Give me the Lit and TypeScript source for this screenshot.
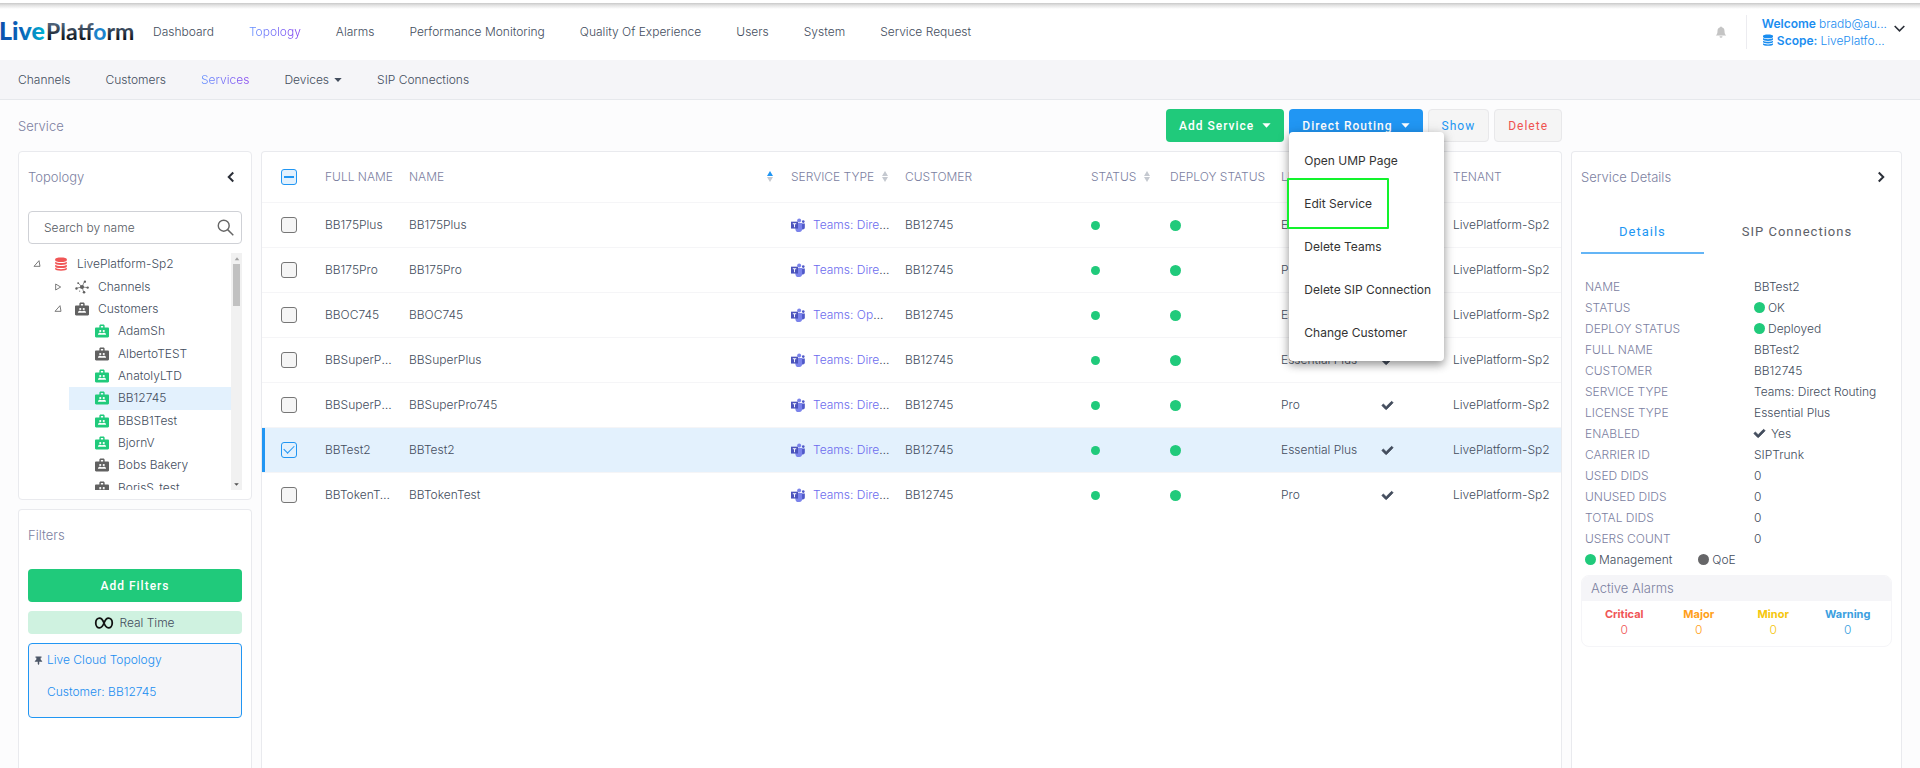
import { LitElement, html, svg, css } from "lit";
import { customElement, property } from "lit/decorators.js";
import { classMap } from "lit/directives/class-map.js";

const TICK =
  "M173.9 439.4l-166.4-166.4c-10-10-10-26.2 0-36.2l36.2-36.2c10-10 26.2-10 36.2 0L192 312.7 432.1 72.6c10-10 26.2-10 36.2 0l36.2 36.2c10 10 10 26.2 0 36.2l-294.4 294.4c-10 10-26.2 10-36.2 0z";

@customElement("lp-icon")
class LpIcon extends LitElement {
  @property() name = "";
  @property({ type: Number }) size = 14;

  static styles = css`
    :host { display: inline-flex; flex: none; vertical-align: middle; }
    svg { display: block; }
  `;

  private shape() {
    switch (this.name) {
      case "tick":
        return svg`<g transform="scale(.046875)"><path fill="currentColor" stroke="currentColor" stroke-width="36" stroke-linejoin="round" d=${TICK}/></g>`;
      case "database":
        return svg`<g fill="currentColor"><path d="M2 4c0-2 4-3 10-3s10 1 10 3v1.600c0 2-4 3-10 3s-10-1-10-3z"/><path d="M2 8.200c1.600 1.500 5.500 2.200 10 2.200s8.400-.7 10-2.200v2.700c0 1.800-4 2.900-10 2.900S2 12.700 2 10.900z"/><path d="M2 13.400c1.600 1.500 5.500 2.200 10 2.200s8.400-.7 10-2.200v2.700C22 17.900 18 19 12 19S2 17.900 2 16.100z"/><path d="M2 18.600c1.600 1.500 5.500 2.200 10 2.200s8.400-.7 10-2.200V21c0 1.600-4 2.500-10 2.500S2 22.600 2 21z"/></g>`;
      case "hub":
        return svg`<g stroke="currentColor" stroke-width="1.200"><path d="M12 12 2.500 14M12 12 5 4.500M12 12 16 3M12 12l9.500 1M12 12l3 9"/></g><g fill="currentColor"><circle cx="12" cy="12" r="3.600"/><circle cx="2.500" cy="14.500" r="2"/><circle cx="5.500" cy="5.500" r="1.500"/><circle cx="17" cy="3" r="2"/><circle cx="21.700" cy="13" r="2"/><circle cx="15.500" cy="21" r="2.200"/><circle cx="8" cy="19" r="1"/></g>`;
      case "bag":
        return svg`<path fill="currentColor" fill-rule="evenodd" d="M7.500 6V3.500C7.500 2 8.400 1 9.800 1h4.400c1.400 0 2.300 1 2.300 2.500V6H22c1.200 0 2 .8 2 2v13c0 1.200-.8 2-2 2H2c-1.200 0-2-.8-2-2V8c0-1.200.8-2 2-2zM10 6h4V3.400h-4z"/><g fill="#fff"><circle cx="9" cy="12" r="1.900"/><circle cx="15" cy="12" r="1.900"/><path d="M5 18.500c0-2.400 1.600-3.500 4-3.500 1.200 0 2.200.4 3 1 .8-.6 1.800-1 3-1 2.400 0 4 1.100 4 3.500z"/></g>`;
      case "teams":
        return svg`<circle cx="21" cy="6.200" r="2.300" fill="#5059c9"/><path d="M17.500 9.500h6.200v6.600a3.700 3.700 0 0 1-6.200 2.700z" fill="#5059c9"/><circle cx="14" cy="4.200" r="3.400" fill="#7b83eb"/><path d="M7.500 8.500H19v9a5.800 5.800 0 0 1-11.500 1.600z" fill="#7b83eb"/><path d="M0 6.300h12v11.800H0z" fill="#4b53bc"/><path d="M3 9h6v1.500H6.800v5.300H5.200v-5.300H3z" fill="#fff"/>`;
      case "search":
        return svg`<g fill="none" stroke="currentColor" stroke-width="2"><circle cx="9.500" cy="9.500" r="7.700"/><path d="M15 15l8 8"/></g>`;
      case "left":
        return svg`<path fill="none" stroke="currentColor" stroke-width="4" d="M16.500 3 7.500 12l9 9"/>`;
      case "right":
        return svg`<path fill="none" stroke="currentColor" stroke-width="4" d="M7.500 3l9 9-9 9"/>`;
      case "down":
        return svg`<path fill="none" stroke="currentColor" stroke-width="3.500" d="M1.500 6.500 12 17 22.500 6.500"/>`;
      case "caret":
        return svg`<path fill="currentColor" d="M1 6h22L12 18z"/>`;
      case "bell":
        return svg`<path fill="currentColor" d="M12 1c1 0 1.600.7 1.700 1.700 3.300.8 5.300 3.600 5.300 7.100 0 4.500 1 6.700 3.500 9.200H1.500C4 16.500 5 14.300 5 9.800c0-3.500 2-6.300 5.300-7.100C10.400 1.700 11 1 12 1zM9 20.500h6a3 3 0 0 1-6 0z"/>`;
      case "pin":
        return svg`<path fill="currentColor" d="M4 1h16v3.500h-2.500l.7 6c2.300 1 3.800 2.500 3.800 5h-8V21l-2 3-2-3v-5.500H2c0-2.500 1.500-4 3.800-5l.7-6H4z"/>`;
      case "infinity":
        return svg`<path fill="none" stroke="currentColor" stroke-width="2.400" d="M12 12C10 7 8.500 5.500 6 5.500S1 8 1 12s2.500 6.500 5 6.500S10 17 12 12s3.500-6.500 6-6.500S23 8 23 12s-2.500 6.500-5 6.500S14 17 12 12z"/>`;
      case "open":
        return svg`<path fill="none" stroke="currentColor" stroke-width="2.500" d="M18 2l3 17H3z"/>`;
      case "closed":
        return svg`<path fill="none" stroke="currentColor" stroke-width="2.500" d="M5 3l15 9-15 9z"/>`;
      case "up-small":
        return svg`<path fill="currentColor" d="M12 5l9 12H3z"/>`;
      default:
        return svg``;
    }
  }

  render() {
    return html`<svg width=${this.size} height=${this.size} viewBox="0 0 24 24" overflow="visible" aria-hidden="true">${this.shape()}</svg>`;
  }
}

const TREE: { level: number; label: string; icon: string; tone: string; toggle?: string; selected?: boolean }[] = [
  { level: 0, label: "LivePlatform-Sp2", icon: "database", tone: "red", toggle: "open" },
  { level: 1, label: "Channels", icon: "hub", tone: "gray", toggle: "closed" },
  { level: 1, label: "Customers", icon: "bag", tone: "gray", toggle: "open" },
  { level: 2, label: "AdamSh", icon: "bag", tone: "green" },
  { level: 2, label: "AlbertoTEST", icon: "bag", tone: "gray" },
  { level: 2, label: "AnatolyLTD", icon: "bag", tone: "green" },
  { level: 2, label: "BB12745", icon: "bag", tone: "green", selected: true },
  { level: 2, label: "BBSB1Test", icon: "bag", tone: "green" },
  { level: 2, label: "BjornV", icon: "bag", tone: "green" },
  { level: 2, label: "Bobs Bakery", icon: "bag", tone: "gray" },
  { level: 2, label: "BorisS_test", icon: "bag", tone: "gray" },
];

const DIRECT = "Teams: Direct Routing";
const SERVICES = [
  { name: "BB175Plus", type: DIRECT, license: "Essential Plus" },
  { name: "BB175Pro", type: DIRECT, license: "Pro" },
  { name: "BBOC745", type: "Teams: Operator Connect", license: "Essential Plus" },
  { name: "BBSuperPlus", type: DIRECT, license: "Essential Plus" },
  { name: "BBSuperPro745", type: DIRECT, license: "Pro" },
  { name: "BBTest2", type: DIRECT, license: "Essential Plus", selected: true },
  { name: "BBTokenTest", type: DIRECT, license: "Pro" },
];

const DETAILS: { key: string; value: string; mark?: "dot" | "tick" }[] = [
  { key: "NAME", value: "BBTest2" },
  { key: "STATUS", value: "OK", mark: "dot" },
  { key: "DEPLOY STATUS", value: "Deployed", mark: "dot" },
  { key: "FULL NAME", value: "BBTest2" },
  { key: "CUSTOMER", value: "BB12745" },
  { key: "SERVICE TYPE", value: DIRECT },
  { key: "LICENSE TYPE", value: "Essential Plus" },
  { key: "ENABLED", value: "Yes", mark: "tick" },
  { key: "CARRIER ID", value: "SIPTrunk" },
  { key: "USED DIDS", value: "0" },
  { key: "UNUSED DIDS", value: "0" },
  { key: "TOTAL DIDS", value: "0" },
  { key: "USERS COUNT", value: "0" },
];

const ALARMS = ["Critical", "Major", "Minor", "Warning"];
const MENU = ["Open UMP Page", "Edit Service", "Delete Teams", "Delete SIP Connection", "Change Customer"];
const NAV = ["Dashboard", "Topology", "Alarms", "Performance Monitoring", "Quality Of Experience", "Users", "System", "Service Request"];
const SUBNAV = ["Channels", "Customers", "Services", "Devices", "SIP Connections"];

@customElement("app-root")
class AppRoot extends LitElement {
  static styles = css`
    :host {
      display: flex;
      flex-direction: column;
      min-height: 100vh;
      background: #fcfcfd;
      color: #434d5d;
      font: 300 12px/16px Inter, "Liberation Sans", sans-serif;
    }
    * { box-sizing: border-box; }
    a { color: inherit; text-decoration: none; }
    button { font: inherit; color: inherit; border: 0; padding: 0; background: none; cursor: pointer; }
    h1, h2, h3, ul, dl, dd { margin: 0; padding: 0; list-style: none; font-size: inherit; font-weight: inherit; }

    .header {
      display: flex;
      align-items: center;
      height: 60px;
      padding: 4px 15px 0 0;
      background: linear-gradient(#c9c9c9, #e3e3e3 40%, #fff) 0 3px / 100% 6px no-repeat #fff;
    }
    .logo { display: block; width: 153px; }
    .logo svg { display: block; }
    .live { font: 900 25px Lato, sans-serif; }
    .platform { font: 700 23px Lato, sans-serif; }
    .nav { display: flex; gap: 35px; flex: 1; white-space: nowrap; }
    .active { color: transparent; background: linear-gradient(90deg, #5f8fff, #8440ee); background-clip: text; -webkit-background-clip: text; }
    .bell { color: #c4c4c4; display: flex; }
    .user { display: flex; align-items: center; gap: 7px; margin-left: 19px; padding-left: 15px; border-left: 1px solid #ececf0; color: #1a8df0; text-align: left; line-height: 17px; }
    .user-line { display: flex; align-items: center; gap: 3px; }
    .user b { font-weight: 600; }
    .user lp-icon { margin-bottom: 2px; }
    .user .chev { color: #2b2f38; margin-bottom: 8px; }

    .subnav { display: flex; align-items: center; gap: 35px; height: 40px; padding: 0 18px; background: #f5f5f8; border-bottom: 1px solid #e6e8ec; }
    .drop { display: flex; align-items: center; gap: 5px; }

    .workspace {
      flex: 1;
      display: grid;
      grid-template-columns: 234px minmax(0, 1fr) 331px;
      grid-template-rows: 51px 1fr;
      column-gap: 9px;
      padding: 0 18px;
    }
    .title { font-size: 13px; color: #7c81a1; align-self: center; }
    .actions { display: flex; justify-content: flex-end; align-items: center; gap: 5px; }
    .btn { display: flex; align-items: center; justify-content: center; gap: 8px; height: 33px; padding: 0 13px; border-radius: 4px; font: 500 12px/16px Roboto, sans-serif; letter-spacing: 1px; color: #fff; white-space: nowrap; }
    .btn.add { background: #20ca7b; }
    .btn.routing { background: #2196f3; }
    .btn.plain { background: #f5f5f5; border: 1px solid #e8e8ea; font-weight: 400; }
    .btn.show { color: #2196f3; }
    .btn.delete { color: #ef5350; }
    .menu-anchor { position: relative; }
    .menu { position: absolute; z-index: 2; top: 23px; left: 0; width: 155px; padding: 7px 0; background: #fff; border-radius: 4px; box-shadow: 0 4px 8px rgba(0, 0, 0, 0.35), 0 1px 14px rgba(0, 0, 0, 0.12); }
    .menu button { display: block; width: 100%; height: 43px; padding: 0 15px; text-align: left; font: 400 12px/16px Inter, sans-serif; color: #333; white-space: nowrap; }
    .menu .marked { position: relative; }
    .menu .marked::after { content: ""; position: absolute; top: -4px; bottom: -4px; left: -2px; width: 98px; border: 2px solid #12f32c; border-radius: 1px; }

    .side { display: flex; flex-direction: column; gap: 9px; }
    .panel { background: #fff; border: 1px solid #e9eaee; border-radius: 4px; }
    .panel.tall { border-bottom: 0; border-radius: 4px 4px 0 0; }
    .stack { display: flex; flex-direction: column; gap: 9px; padding: 0 9px 9px; }
    .grow { flex: 1; }
    .panel-head { display: flex; align-items: center; justify-content: space-between; height: 50px; font-size: 13px; color: #7c81a1; }
    .panel-head button { color: #2b2f38; display: flex; padding: 0 5px; }

    .search { display: flex; align-items: center; height: 33px; padding: 0 7px 0 15px; border: 1px solid #cfd1d6; border-radius: 4px; color: #666; }
    .search input { flex: 1; min-width: 0; border: 0; outline: 0; padding: 0; background: none; font: inherit; color: inherit; }
    .search input::placeholder { color: #555a62; opacity: 1; }

    .tree { display: flex; height: 237px; overflow: hidden; }
    .tree ul { flex: 1; height: 246px; display: grid; grid-auto-rows: 1fr; }
    .node { display: grid; grid-template-columns: 20px 26px 1fr; align-items: center; padding-left: 3px; white-space: nowrap; }
    .node .ico { padding-left: 3px; }
    .level1 { margin-left: 21px; }
    .level2 { margin-left: 41px; }
    .selected { background: #e3f1fd; }
    .gray { color: #616161; }
    .green { color: #20ca7b; }
    .red { color: #f05656; }
    .ico, .twist { display: flex; }
    .twist { padding-left: 2px; color: #616161; }
    .bar { display: flex; flex-direction: column; align-items: center; width: 11px; background: #f1f1f1; }
    .bar .cap { height: 11px; display: flex; align-items: center; color: #a0a0a0; }
    .bar .cap.end { margin-top: auto; color: #505050; }
    .thumb { width: 7px; height: 42px; background: #c1c1c1; }

    .wide { display: block; width: 100%; height: 33px; border-radius: 4px; background: #20ca7b; color: #fff; font: 500 12px/16px Roboto, sans-serif; letter-spacing: 1px; }
    .real { display: flex; align-items: center; justify-content: center; gap: 6px; height: 23px; border-radius: 4px; background: #cff2e0; }
    .real lp-icon { color: #111; }
    .filter { display: grid; grid-template-columns: 13px 1fr; align-content: center; row-gap: 16px; height: 75px; padding: 0 5px 9px; border: 1px solid #2196f3; border-radius: 4px; background: #f5f5f8; color: #1a8df0; }
    .filter lp-icon { color: #4b5566; align-self: center; }
    .filter .second { grid-column: 2; }

    table { width: 100%; border-collapse: collapse; table-layout: fixed; }
    th, td { padding: 0 8px; text-align: left; font-weight: 300; white-space: nowrap; overflow: hidden; text-overflow: ellipsis; border-bottom: 1px solid #f5f5f7; }
    th { height: 50px; padding-right: 2px; color: #7c81a1; }
    td { height: 45px; }
    td:nth-child(4) { padding-right: 7px; }
    th:first-child, td:first-child { padding-left: 19px; }
    tr:last-child td { border-bottom: 0; }
    tr.selected td:first-child { box-shadow: inset 3px 0 #2196f3; }
    .c-check { width: 55px; }
    .c-full { width: 84px; }
    .c-type { width: 114px; }
    .c-customer { width: 186px; }
    .c-status { width: 79px; }
    .c-deploy { width: 111px; }
    .c-license { width: 101px; }
    .c-enabled { width: 71px; }
    .c-tenant { width: 116px; }
    .head { display: flex; align-items: center; gap: 8px; }
    .head.spread { justify-content: space-between; padding-right: 8px; }
    .sort { display: flex; flex-direction: column; gap: 1px; color: #c5c9d0; }
    .sort i { width: 0; height: 0; border: 3px solid transparent; }
    .sort i:first-child { border-top: 0; border-bottom: 5px solid currentColor; }
    .sort i:last-child { border-bottom: 0; border-top: 5px solid currentColor; }
    .sort.asc i:first-child { border-bottom-color: #2196f3; }
    .type { display: flex; align-items: center; gap: 8px; }
    .type span { overflow: hidden; text-overflow: ellipsis; }
    .type a { color: #6c6cee; }
    .dot { display: inline-block; flex: none; width: 11px; height: 11px; border-radius: 50%; background: #20ca7b; vertical-align: middle; }
    .dot.small { width: 9px; height: 9px; }
    .dot.dark { background: #666668; }

    input[type="checkbox"] { appearance: none; display: grid; place-content: center; width: 16px; height: 16px; margin: 0; border: 1px solid #767676; border-radius: 3px; background: #f5f5f5; }
    input[type="checkbox"]:checked, input[type="checkbox"]:indeterminate { border-color: #2196f3; background: #e3f1fd; }
    input[type="checkbox"]:checked::before { content: ""; width: 9px; height: 5px; margin-bottom: 3px; border: solid #2196f3; border-width: 0 0 1px 1px; transform: rotate(-45deg); }
    input[type="checkbox"]:indeterminate::before { content: ""; width: 10px; height: 2px; background: #2196f3; }

    .tabs { display: flex; }
    .tabs button { height: 43px; padding: 0 38px; font: 400 13px/16px Roboto, sans-serif; letter-spacing: 1px; color: #5c6068; border-bottom: 2px solid transparent; white-space: nowrap; }
    .tabs .on { color: #2196f3; border-color: #64b5f6; }
    .facts { padding: 13px 4px 0; line-height: 21px; }
    .facts dl { display: grid; grid-template-columns: 169px 1fr; }
    .facts dt { color: #7c81a1; }
    .facts dd, .legend span { display: flex; align-items: center; gap: 3px; }
    .facts dd lp-icon { margin-right: 3px; }
    .legend { display: flex; gap: 26px; }
    .alarms { margin-top: -4px; border: 1px solid #f5f5f8; border-radius: 8px; overflow: hidden; }
    .alarms h3 { padding: 0 9px; height: 25px; line-height: 25px; font-size: 13px; color: #7c81a1; background: #f5f5f8; }
    .alarm-row { display: grid; grid-template-columns: repeat(4, 1fr); padding: 5px 6px 8px 5px; text-align: center; }
    .alarm-row b { display: block; font-weight: 700; font-size: 11px; }
    .Critical { color: #f05656; }
    .Major { color: #ff9f1a; }
    .Minor { color: #f5c60c; }
    .Warning { color: #3b9fe0; }
  `;

  private sort(asc = false) {
    return html`<span class=${classMap({ sort: true, asc })}><i></i><i></i></span>`;
  }

  private header() {
    return html`
      <header class="header">
        <a class="logo" href="#" aria-label="LivePlatform">
          <svg width="150" height="32" viewBox="0 -4 150 32">
            <defs>
              <linearGradient id="a" x1="0" x2="1"><stop offset="0" stop-color="#0b51ad" /><stop offset=".5" stop-color="#0a63b8" /><stop offset="1" stop-color="#00b4d2" /></linearGradient>
              <linearGradient id="b" x1="0" x2="0" y1="0" y2="1"><stop offset=".25" stop-color="#50637a" /><stop offset=".8" stop-color="#10151d" /></linearGradient>
            </defs>
            <text class="live" x="-1" y="20" fill="url(#a)">Live</text>
            <text class="platform" x="46" y="20" fill="url(#b)">Platf<tspan fill="#1c83cc">o</tspan>rm</text>
          </svg>
        </a>
        <nav class="nav">${NAV.map((n) => html`<a href="#" class=${classMap({ active: n === "Topology" })}>${n}</a>`)}</nav>
        <button class="bell" aria-label="Notifications"><lp-icon name="bell" size="12"></lp-icon></button>
        <button class="user">
          <span>
            <span class="user-line"><b>Welcome</b> bradb@au...</span>
            <span class="user-line"><lp-icon name="database" size="12"></lp-icon><b>Scope:</b> LivePlatfo...</span>
          </span>
          <lp-icon class="chev" name="down" size="11"></lp-icon>
        </button>
      </header>
      <nav class="subnav">
        ${SUBNAV.map((n) =>
          n === "Devices"
            ? html`<a href="#" class="drop">${n}<lp-icon name="caret" size="8"></lp-icon></a>`
            : html`<a href="#" class=${classMap({ active: n === "Services" })}>${n}</a>`
        )}
      </nav>
    `;
  }

  private actions() {
    return html`
      <h1 class="title">Service</h1>
      <div class="actions">
        <button class="btn add">Add Service<lp-icon name="caret" size="9"></lp-icon></button>
        <div class="menu-anchor">
          <button class="btn routing" aria-haspopup="menu" aria-expanded="true">Direct Routing<lp-icon name="caret" size="9"></lp-icon></button>
          <div class="menu" role="menu">
            ${MENU.map((m) => html`<button role="menuitem" class=${classMap({ marked: m === "Edit Service" })}>${m}</button>`)}
          </div>
        </div>
        <button class="btn plain show">Show</button>
        <button class="btn plain delete">Delete</button>
      </div>
      <span></span>
    `;
  }

  private side() {
    return html`
      <div class="side">
        <section class="panel stack">
          <div class="panel-head"><h2>Topology</h2><button aria-label="Collapse"><lp-icon name="left" size="12"></lp-icon></button></div>
          <label class="search"><input type="text" placeholder="Search by name" aria-label="Search by name" /><lp-icon name="search" size="17"></lp-icon></label>
          <div class="tree">
            <ul>
              ${TREE.map(
                (t) => html`<li class=${classMap({ node: true, [`level${t.level}`]: true, selected: !!t.selected })}>
                  <span class="twist">${t.toggle ? html`<lp-icon name=${t.toggle} size="8"></lp-icon>` : ""}</span>
                  <span class=${`ico ${t.tone}`}><lp-icon name=${t.icon} size="14"></lp-icon></span>
                  <span>${t.label}</span>
                </li>`
              )}
            </ul>
            <div class="bar">
              <span class="cap"><lp-icon name="up-small" size="6"></lp-icon></span>
              <span class="thumb"></span>
              <span class="cap end"><lp-icon name="caret" size="5"></lp-icon></span>
            </div>
          </div>
        </section>
        <section class="panel stack tall grow">
          <div class="panel-head"><h2>Filters</h2></div>
          <button class="wide">Add Filters</button>
          <div class="real"><lp-icon name="infinity" size="18"></lp-icon>Real Time</div>
          <div class="filter"><lp-icon name="pin" size="9"></lp-icon><span>Live Cloud Topology</span><span class="second">Customer: BB12745</span></div>
        </section>
      </div>
    `;
  }

  private services() {
    return html`
      <section class="panel tall">
        <table>
          <colgroup>
            <col class="c-check" /><col class="c-full" /><col /><col class="c-type" /><col class="c-customer" />
            <col class="c-status" /><col class="c-deploy" /><col class="c-license" /><col class="c-enabled" /><col class="c-tenant" />
          </colgroup>
          <thead>
            <tr>
              <th><input type="checkbox" aria-label="Select all" .indeterminate=${true} /></th>
              <th>FULL NAME</th>
              <th><span class="head spread">NAME ${this.sort(true)}</span></th>
              <th><span class="head">SERVICE TYPE ${this.sort()}</span></th>
              <th>CUSTOMER</th>
              <th><span class="head">STATUS ${this.sort()}</span></th>
              <th>DEPLOY STATUS</th>
              <th>LICENSE TYPE</th>
              <th>ENABLED</th>
              <th>TENANT</th>
            </tr>
          </thead>
          <tbody>
            ${SERVICES.map(
              (s) => html`<tr class=${classMap({ selected: !!s.selected })}>
                <td><input type="checkbox" aria-label=${s.name} .checked=${!!s.selected} /></td>
                <td>${s.name}</td>
                <td>${s.name}</td>
                <td><div class="type"><lp-icon name="teams" size="14"></lp-icon><span><a href="#">${s.type}</a></span></div></td>
                <td>BB12745</td>
                <td><span class="dot small"></span></td>
                <td><span class="dot"></span></td>
                <td>${s.license}</td>
                <td><lp-icon name="tick" size="11"></lp-icon></td>
                <td>LivePlatform-Sp2</td>
              </tr>`
            )}
          </tbody>
        </table>
      </section>
    `;
  }

  private details() {
    return html`
      <section class="panel stack tall">
        <div class="panel-head"><h2>Service Details</h2><button aria-label="Collapse"><lp-icon name="right" size="12"></lp-icon></button></div>
        <div class="tabs"><button class="on">Details</button><button>SIP Connections</button></div>
        <div class="facts">
          <dl>
            ${DETAILS.map(
              (d) => html`<dt>${d.key}</dt>
                <dd>${d.mark === "dot" ? html`<span class="dot"></span>` : ""}${d.mark === "tick" ? html`<lp-icon name="tick" size="11"></lp-icon>` : ""}${d.value}</dd>`
            )}
          </dl>
          <div class="legend"><span><i class="dot"></i>Management</span><span><i class="dot dark"></i>QoE</span></div>
        </div>
        <div class="alarms">
          <h3>Active Alarms</h3>
          <div class="alarm-row">${ALARMS.map((a) => html`<div class=${a}><b>${a}</b>0</div>`)}</div>
        </div>
      </section>
    `;
  }

  render() {
    return html`${this.header()}
      <main class="workspace">${this.actions()} ${this.side()} ${this.services()} ${this.details()}</main>`;
  }
}
